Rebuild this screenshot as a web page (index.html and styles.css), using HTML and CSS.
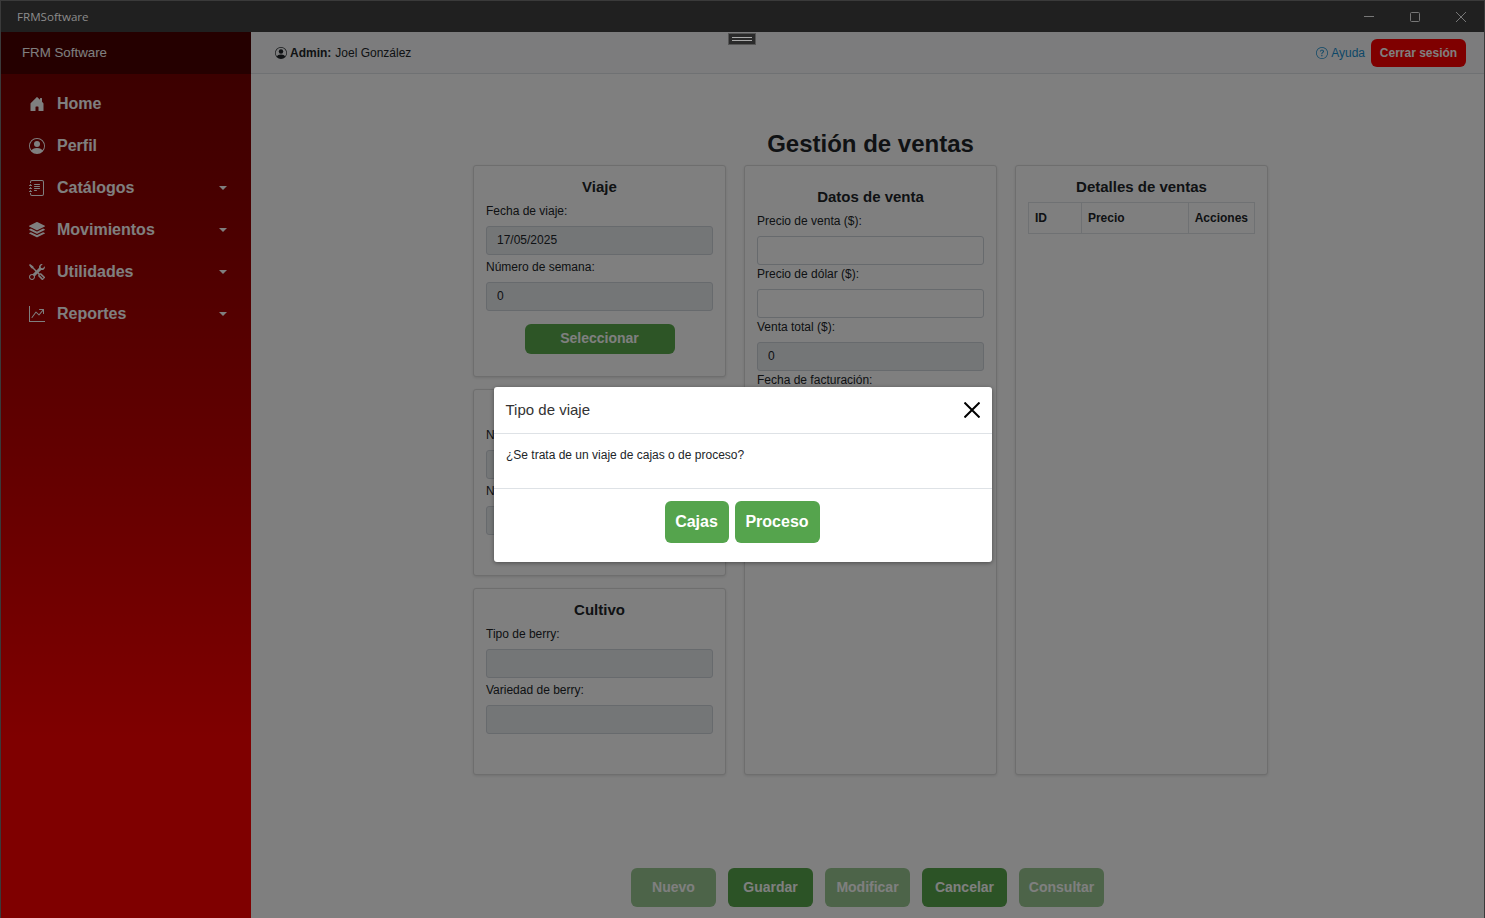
FILE: index.html
```html
<!DOCTYPE html>
<html lang="es">
<head>
    <meta charset="UTF-8">
    <meta name="viewport" content="width=device-width, initial-scale=1.0">
    <title>FRMSoftware</title>
    <link rel="stylesheet" href="styles.css">
</head>
<body>
    <div class="window">
        <div class="titlebar">
            <span class="titlebar-name">FRMSoftware</span>
            <div class="window-controls">
                <svg viewBox="0 0 10 10" width="10" height="10"><path d="M0 4.5h10" stroke="#777" fill="none"/></svg>
                <svg viewBox="0 0 10 10" width="10" height="10"><rect x="0.5" y="0.5" width="9" height="9" rx="1" stroke="#777" fill="none"/></svg>
                <svg viewBox="0 0 10 10" width="10" height="10"><path d="M0 0l10 10M10 0L0 10" stroke="#777" fill="none"/></svg>
            </div>
        </div>

        <div class="app">
            <aside class="sidebar">
                <div class="brand">FRM Software</div>
                <nav class="menu">
                    <a class="menu-item" href="#">
                        <svg class="menu-icon" viewBox="0 0 16 16"><path d="M6.5 14.5v-3.505c0-.245.25-.495.5-.495h2c.25 0 .5.25.5.5v3.5a.5.5 0 0 0 .5.5h4a.5.5 0 0 0 .5-.5v-7a.5.5 0 0 0-.146-.354L13 5.793V2.5a.5.5 0 0 0-.5-.5h-1a.5.5 0 0 0-.5.5v1.293L8.354 1.146a.5.5 0 0 0-.708 0l-6 6A.5.5 0 0 0 1.5 7.5v7a.5.5 0 0 0 .5.5h4a.5.5 0 0 0 .5-.5"/></svg>
                        <span>Home</span>
                    </a>
                    <a class="menu-item" href="#">
                        <svg class="menu-icon" viewBox="0 0 16 16"><path d="M11 6a3 3 0 1 1-6 0 3 3 0 0 1 6 0"/><path fill-rule="evenodd" d="M0 8a8 8 0 1 1 16 0A8 8 0 0 1 0 8m8-7a7 7 0 0 0-5.468 11.37C3.242 11.226 4.805 10 8 10s4.757 1.225 5.468 2.37A7 7 0 0 0 8 1"/></svg>
                        <span>Perfil</span>
                    </a>
                    <a class="menu-item has-caret" href="#">
                        <svg class="menu-icon" viewBox="0 0 16 16"><path d="M5 10.5a.5.5 0 0 1 .5-.5h2a.5.5 0 0 1 0 1h-2a.5.5 0 0 1-.5-.5m0-2a.5.5 0 0 1 .5-.5h5a.5.5 0 0 1 0 1h-5a.5.5 0 0 1-.5-.5m0-2a.5.5 0 0 1 .5-.5h5a.5.5 0 0 1 0 1h-5a.5.5 0 0 1-.5-.5m0-2a.5.5 0 0 1 .5-.5h5a.5.5 0 0 1 0 1h-5a.5.5 0 0 1-.5-.5"/><path d="M3 0h10a2 2 0 0 1 2 2v12a2 2 0 0 1-2 2H3a2 2 0 0 1-2-2v-1h1v1a1 1 0 0 0 1 1h10a1 1 0 0 0 1-1V2a1 1 0 0 0-1-1H3a1 1 0 0 0-1 1v1H1V2a2 2 0 0 1 2-2"/><path d="M1 5v-.5a.5.5 0 0 1 1 0V5h.5a.5.5 0 0 1 0 1h-2a.5.5 0 0 1 0-1zm0 3v-.5a.5.5 0 0 1 1 0V8h.5a.5.5 0 0 1 0 1h-2a.5.5 0 0 1 0-1zm0 3v-.5a.5.5 0 0 1 1 0v.5h.5a.5.5 0 0 1 0 1h-2a.5.5 0 0 1 0-1z"/></svg>
                        <span>Catálogos</span>
                    </a>
                    <a class="menu-item has-caret" href="#">
                        <svg class="menu-icon" viewBox="0 0 16 16"><path d="m14.12 10.163 1.715.858c.22.11.22.424 0 .534L8.267 15.34a.6.6 0 0 1-.534 0L.165 11.555a.299.299 0 0 1 0-.534l1.716-.858 5.317 2.659c.505.252 1.1.252 1.604 0l5.317-2.66zM7.733.063a.6.6 0 0 1 .534 0l7.568 3.784a.3.3 0 0 1 0 .535L8.267 8.165a.6.6 0 0 1-.534 0L.165 4.382a.299.299 0 0 1 0-.535z"/><path d="m14.12 6.576 1.715.858c.22.11.22.424 0 .534l-7.568 3.784a.6.6 0 0 1-.534 0L.165 7.968a.299.299 0 0 1 0-.534l1.716-.858 5.317 2.659c.505.252 1.1.252 1.604 0z"/></svg>
                        <span>Movimientos</span>
                    </a>
                    <a class="menu-item has-caret" href="#">
                        <svg class="menu-icon" viewBox="0 0 16 16"><path d="M1 0 0 1l2.2 3.081a1 1 0 0 0 .815.419h.07a1 1 0 0 1 .708.293l2.675 2.675-2.617 2.654A3.003 3.003 0 0 0 0 13a3 3 0 1 0 5.878-.851l2.654-2.617.968.968-.305.914a1 1 0 0 0 .242 1.023l3.27 3.27a.997.997 0 0 0 1.414 0l1.586-1.586a.997.997 0 0 0 0-1.414l-3.27-3.27a1 1 0 0 0-1.023-.242L10.5 9.5l-.96-.96 2.68-2.643A3.005 3.005 0 0 0 16 3q0-.405-.102-.777l-2.14 2.141L12 4l-.364-1.757L13.777.102a3 3 0 0 0-3.675 3.68L7.462 6.46 4.793 3.793a1 1 0 0 1-.293-.707v-.071a1 1 0 0 0-.419-.814zm9.646 10.646a.5.5 0 0 1 .708 0l2.914 2.915a.5.5 0 0 1-.707.707l-2.915-2.914a.5.5 0 0 1 0-.708M3 11l.471.242.529.026.287.445.445.287.026.529L5 13l-.242.471-.026.529-.445.287-.287.445-.529.026L3 15l-.471-.242L2 14.732l-.287-.445L1.268 14l-.026-.529L1 13l.242-.471.026-.529.445-.287.287-.445.529-.026z"/></svg>
                        <span>Utilidades</span>
                    </a>
                    <a class="menu-item has-caret" href="#">
                        <svg class="menu-icon" viewBox="0 0 16 16"><path fill-rule="evenodd" d="M0 0h1v15h15v1H0zm10 3.5a.5.5 0 0 1 .5-.5h4a.5.5 0 0 1 .5.5v4a.5.5 0 0 1-1 0V4.9l-3.613 4.417a.5.5 0 0 1-.74.037L7.06 6.767l-3.656 5.027a.5.5 0 0 1-.808-.588l4-5.5a.5.5 0 0 1 .758-.06l2.609 2.61L13.445 4H10.5a.5.5 0 0 1-.5-.5"/></svg>
                        <span>Reportes</span>
                    </a>
                </nav>
            </aside>

            <div class="content">
                <header class="topbar">
                    <div class="user">
                        <svg class="user-icon" viewBox="0 0 16 16"><path d="M11 6a3 3 0 1 1-6 0 3 3 0 0 1 6 0"/><path fill-rule="evenodd" d="M0 8a8 8 0 1 1 16 0A8 8 0 0 1 0 8m8-7a7 7 0 0 0-5.468 11.37C3.242 11.226 4.805 10 8 10s4.757 1.225 5.468 2.37A7 7 0 0 0 8 1"/></svg>
                        <b>Admin:</b> Joel González
                    </div>
                    <div class="topbar-right">
                        <a class="help" href="#">
                            <svg class="help-icon" viewBox="0 0 16 16"><path d="M8 15A7 7 0 1 1 8 1a7 7 0 0 1 0 14m0 1A8 8 0 1 0 8 0a8 8 0 0 0 0 16"/><path d="M5.255 5.786a.237.237 0 0 0 .241.247h.825c.138 0 .248-.113.266-.25.09-.656.54-1.134 1.342-1.134.686 0 1.314.343 1.314 1.168 0 .635-.374.927-.965 1.371-.673.489-1.206 1.06-1.168 1.987l.003.217a.25.25 0 0 0 .25.246h.811a.25.25 0 0 0 .25-.25v-.105c0-.718.273-.927 1.01-1.486.609-.463 1.244-.977 1.244-2.056 0-1.511-1.276-2.241-2.673-2.241-1.267 0-2.655.59-2.75 2.286m1.557 5.763c0 .533.425.927 1.01.927.609 0 1.028-.394 1.028-.927 0-.552-.42-.94-1.029-.94-.584 0-1.009.388-1.009.94"/></svg>
                            Ayuda
                        </a>
                        <button class="logout">Cerrar sesión</button>
                    </div>
                </header>

                <main class="page">
                    <h1>Gestión de ventas</h1>
                    <div class="columns">
                        <div class="column">
                            <section class="card card-viaje">
                                <h2>Viaje</h2>
                                <label>Fecha de viaje:</label>
                                <input type="text" value="17/05/2025" disabled>
                                <label>Número de semana:</label>
                                <input type="text" value="0" disabled>
                                <button class="btn-select">Seleccionar</button>
                            </section>
                            <section class="card card-half card-hidden-title">
                                <label>N</label>
                                <input type="text" disabled>
                                <label>N</label>
                                <input type="text" disabled>
                            </section>
                            <section class="card card-half">
                                <h2>Cultivo</h2>
                                <label>Tipo de berry:</label>
                                <input type="text" disabled>
                                <label>Variedad de berry:</label>
                                <input type="text" disabled>
                            </section>
                        </div>

                        <section class="card card-venta">
                            <h2>Datos de venta</h2>
                            <label>Precio de venta ($):</label>
                            <input type="text">
                            <label>Precio de dólar ($):</label>
                            <input type="text">
                            <label>Venta total ($):</label>
                            <input type="text" value="0" disabled>
                            <label>Fecha de facturación:</label>
                            <input type="text">
                        </section>

                        <section class="card">
                            <h2>Detalles de ventas</h2>
                            <table class="details">
                                <tr>
                                    <th class="col-id">ID</th>
                                    <th class="col-price">Precio</th>
                                    <th>Acciones</th>
                                </tr>
                            </table>
                        </section>
                    </div>

                    <div class="actions">
                        <button class="btn-action" disabled>Nuevo</button>
                        <button class="btn-action">Guardar</button>
                        <button class="btn-action" disabled>Modificar</button>
                        <button class="btn-action">Cancelar</button>
                        <button class="btn-action" disabled>Consultar</button>
                    </div>
                </main>

                <button class="sidebar-toggle"><span></span></button>
            </div>

            <div class="backdrop"></div>

            <div class="modal">
                <div class="modal-header">
                    <span>Tipo de viaje</span>
                    <svg class="modal-close" viewBox="0 0 16 16"><path d="M0.5 0.5l15 15M15.5 0.5l-15 15" stroke="#000" stroke-width="2" fill="none"/></svg>
                </div>
                <div class="modal-body">¿Se trata de un viaje de cajas o de proceso?</div>
                <div class="modal-footer">
                    <button class="btn-modal btn-cajas">Cajas</button>
                    <button class="btn-modal btn-proceso">Proceso</button>
                </div>
            </div>
        </div>
    </div>
</body>
</html>
```

FILE: styles.css
```css
* {
    box-sizing: border-box;
}

html, body {
    height: 100%;
}

body {
    margin: 0;
    font-family: "Liberation Sans", Arial, sans-serif;
    font-size: 12px;
    color: #212529;
    background-color: #202020;
    overflow: hidden;
}

.window {
    display: flex;
    flex-direction: column;
    height: 918px;
    border: 1px solid #3a3a3a;
    border-bottom: none;
}

.titlebar {
    display: flex;
    justify-content: space-between;
    align-items: center;
    height: 31px;
    padding-left: 16px;
    background-color: #202020;
    flex-shrink: 0;
}

.titlebar-name {
    font-family: "Open Sans", sans-serif;
    font-size: 11.6px;
    color: #8c8c8c;
}

.window-controls {
    display: flex;
    gap: 36px;
    padding-right: 18px;
}

.app {
    position: relative;
    display: flex;
    flex: 1;
    min-height: 0;
}

.sidebar {
    width: 250px;
    flex-shrink: 0;
    background: linear-gradient(to bottom, #780000 42px, #ff0000 80%);
}

.brand {
    display: flex;
    align-items: center;
    height: 42px;
    padding-left: 21px;
    padding-bottom: 1px;
    font-size: 13.3px;
    color: #fff;
    background-color: #4a0000;
}

.menu {
    padding-top: 9px;
}

.menu-item {
    position: relative;
    display: flex;
    align-items: center;
    height: 42px;
    padding-left: 28px;
    font-size: 16px;
    font-weight: bold;
    color: #fff;
    text-decoration: none;
}

.menu-icon {
    width: 16px;
    height: 16px;
    margin-right: 12px;
    fill: #fff;
}

.has-caret::after {
    content: "";
    position: absolute;
    left: 218px;
    top: 19px;
    border-top: 4px solid #fff;
    border-left: 4px solid transparent;
    border-right: 4px solid transparent;
}

.content {
    position: relative;
    display: flex;
    flex-direction: column;
    flex: 1;
    min-width: 0;
    background-color: #fff;
}

.topbar {
    display: flex;
    justify-content: space-between;
    align-items: center;
    height: 42px;
    padding: 0 18px 0 24px;
    background-color: #f8f9fa;
    border-bottom: 1px solid #dee2e6;
    flex-shrink: 0;
}

.user {
    display: flex;
    align-items: center;
    gap: 3px;
}

.user b {
    margin-right: 1px;
}

.user-icon {
    width: 12px;
    height: 12px;
    fill: #212529;
}

.topbar-right {
    display: flex;
    align-items: center;
    gap: 6px;
}

.help {
    display: flex;
    align-items: center;
    gap: 3px;
    color: #1a8fd0;
    text-decoration: none;
}

.help-icon {
    width: 12px;
    height: 12px;
    fill: #1a8fd0;
}

.logout {
    width: 95px;
    height: 28px;
    font-family: inherit;
    font-size: 12px;
    font-weight: bold;
    color: #fff;
    background-color: #ff0000;
    border: none;
    border-radius: 6px;
}

/* sits above the backdrop in the reference */
.sidebar-toggle {
    position: absolute;
    top: 1px;
    left: 477px;
    z-index: 1;
    display: flex;
    justify-content: center;
    align-items: center;
    width: 28px;
    height: 12px;
    padding: 0;
    background-color: #2a2a2a;
    border: 1px solid #555;
}

.sidebar-toggle span {
    width: 20px;
    height: 4px;
    border-top: 1px solid #aaa;
    border-bottom: 1px solid #aaa;
}

.page {
    padding-top: 55px;
}

h1 {
    margin: 0 0 7px 6px;
    font-size: 24px;
    line-height: 29px;
    text-align: center;
    color: #212529;
}

.columns {
    display: grid;
    grid-template-columns: repeat(3, 253px);
    gap: 18px;
    justify-content: center;
    height: 610px;
    padding-left: 6px;
}

.column {
    display: flex;
    flex-direction: column;
    gap: 12px;
}

.card {
    padding: 12px;
    background-color: #fff;
    border: 1px solid #dcdcdc;
    border-radius: 3px;
    box-shadow: 0 1px 3px rgba(0, 0, 0, 0.12);
}

.card-viaje {
    height: 212px;
}

.card-half {
    height: 187px;
}

.card-hidden-title {
    padding-top: 38px;
}

.card h2 {
    margin: 0 0 8px;
    font-size: 15px;
    line-height: 18px;
    text-align: center;
    color: #212529;
}

.card label {
    display: block;
    height: 14px;
    margin-bottom: 8px;
    line-height: 14px;
}

.card input {
    display: block;
    width: 100%;
    height: 29px;
    margin-bottom: 5px;
    padding: 0 10px 2px;
    font-family: inherit;
    font-size: 12px;
    color: #212529;
    background-color: #fff;
    border: 1px solid #ced4da;
    border-radius: 3px;
}

.card input:disabled {
    background-color: #e9ecef;
    opacity: 1;
}

.card-venta {
    padding-top: 22px;
}

.card-venta input {
    margin-bottom: 2px;
}

.btn-select {
    display: block;
    width: 150px;
    height: 30px;
    margin: 13px auto 0;
    padding: 0 0 2px;
    font-family: inherit;
    font-size: 14px;
    font-weight: bold;
    color: #fff;
    background-color: #5aaa4c;
    border: none;
    border-radius: 6px;
}

.details {
    width: 100%;
    margin-top: -2px;
    border-collapse: collapse;
}

.details th {
    height: 31px;
    padding: 0 6px;
    font-size: 12px;
    text-align: left;
    border: 1px solid #dee2e6;
}

.col-id {
    width: 53px;
}

.col-price {
    width: 107px;
}

.actions {
    display: flex;
    justify-content: center;
    gap: 12px;
    margin-top: 93px;
}

.btn-action {
    width: 85px;
    height: 39px;
    padding: 0 0 2px;
    font-family: inherit;
    font-size: 14px;
    font-weight: bold;
    color: #fff;
    background-color: #58a64c;
    border: none;
    border-radius: 6px;
}

.btn-action:disabled {
    opacity: 0.6;
}

.backdrop {
    position: absolute;
    top: 0;
    left: 0;
    right: 0;
    bottom: 0;
    background-color: rgba(0, 0, 0, 0.5);
}

.modal {
    position: absolute;
    top: 355px;
    left: 493px;
    width: 498px;
    height: 175px;
    background-color: #fff;
    border-radius: 3px;
    box-shadow: 0 1px 4px rgba(0, 0, 0, 0.4);
}

.modal-header {
    display: flex;
    justify-content: space-between;
    align-items: center;
    height: 47px;
    padding: 0 12px 0 11.5px;
    font-size: 15px;
    color: #333;
    border-bottom: 1px solid #dee2e6;
}

.modal-header span {
    margin-bottom: 2px;
}

.modal-close {
    width: 16px;
    height: 16px;
}

.modal-body {
    height: 55px;
    padding: 14px 12px 0;
    border-bottom: 1px solid #dee2e6;
}

.modal-footer {
    display: flex;
    justify-content: center;
    gap: 6px;
    padding: 12px 2px 0 0;
}

.btn-modal {
    height: 42px;
    padding: 0;
    font-family: inherit;
    font-size: 16px;
    font-weight: bold;
    color: #fff;
    background-color: #55a44d;
    border: none;
    border-radius: 6px;
}

.btn-cajas {
    width: 64px;
}

.btn-proceso {
    width: 85px;
}
```
